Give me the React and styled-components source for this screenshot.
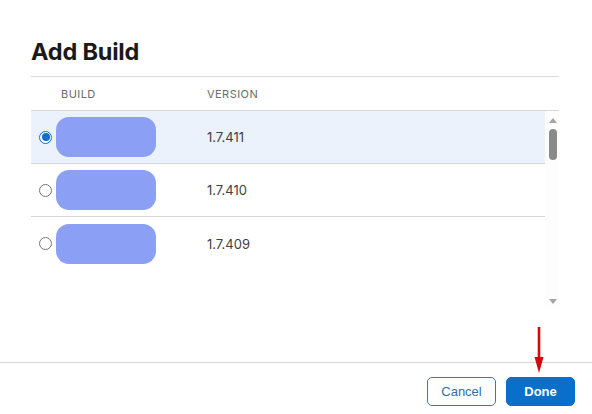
import React, { useState } from "react";
import styled, { createGlobalStyle } from "styled-components";

const Global = createGlobalStyle`
  html, body { margin: 0; padding: 0; background: #fff; }
  body { font-family: Inter, "Noto Sans", "Liberation Sans", sans-serif; }
  * { box-sizing: border-box; }
`;

const Page = styled.div`
  position: relative;
  width: 592px;
  height: 414px;
  display: flex;
  flex-direction: column;
  background: #fff;
  overflow: hidden;
`;

const Body = styled.div`
  padding: 0 33px 0 31px;
  flex: 1;
  display: flex;
  flex-direction: column;
`;

const Title = styled.h1`
  margin: 0;
  padding-top: 38px;
  height: 77px;
  font-size: 23.5px;
  font-weight: 700;
  color: #1a1a1a;
  letter-spacing: -0.2px;
  line-height: 28px;
  border-bottom: 1px solid #d9d9d9;
`;

const HeaderRow = styled.div`
  display: grid;
  grid-template-columns: 146px 1fr;
  height: 34px;
  align-items: center;
  padding-left: 30px;
  border-bottom: 1px solid #d6d6d6;
`;

const HeadCell = styled.div`
  font-size: 11px;
  color: #6b6b6b;
  letter-spacing: 0.45px;
  text-transform: uppercase;
  padding-top: 1px;
`;

const TableArea = styled.div`
  display: flex;
  height: 197px;
`;

const List = styled.div`
  flex: 1;
  display: flex;
  flex-direction: column;
`;

const Row = styled.label`
  display: grid;
  grid-template-columns: 17px 151px 1fr;
  align-items: center;
  height: 53px;
  padding-left: 8px;
  background: ${(p) => (p.$selected ? "#ebf2fb" : "#fff")};
  border-bottom: ${(p) => (p.$last ? "none" : "1px solid #d6d6d6")};
  cursor: pointer;
`;

const Radio = styled.span`
  width: 13px;
  height: 13px;
  border-radius: 50%;
  border: 1px solid ${(p) => (p.$checked ? "#0b6fcf" : "#777")};
  background: #fff;
  display: flex;
  align-items: center;
  justify-content: center;
  &::after {
    content: "";
    width: 8px;
    height: 8px;
    border-radius: 50%;
    background: ${(p) => (p.$checked ? "#0b6fcf" : "transparent")};
  }
`;

const Pill = styled.span`
  width: 100px;
  height: 40px;
  border-radius: 13px;
  background: #8ba0f4;
`;

const Version = styled.span`
  font-size: 13px;
  color: #404040;
`;

const Scrollbar = styled.div`
  width: 14px;
  display: flex;
  flex-direction: column;
  align-items: center;
  background: #fdfdfd;
  padding-top: 7px;
`;

const ArrowUp = styled.span`
  width: 0;
  height: 0;
  border-left: 4px solid transparent;
  border-right: 4px solid transparent;
  border-bottom: 5px solid #a3a3a3;
  margin-left: 1px;
`;

const Thumb = styled.span`
  width: 8px;
  height: 31px;
  border-radius: 4px;
  background: #8a8a8a;
  margin-top: 6px;
  margin-left: 2px;
`;

const Track = styled.span`
  flex: 1;
`;

const ArrowDown = styled(ArrowUp)`
  border-bottom: none;
  border-top: 5px solid #a3a3a3;
  margin-bottom: 4px;
`;

const Footer = styled.div`
  height: 52px;
  border-top: 1px solid #d6d6d6;
  display: flex;
  justify-content: flex-end;
  align-items: flex-start;
  gap: 10px;
  padding: 14px 17px 0 0;
`;

const Button = styled.button`
  width: 69px;
  height: 29px;
  border-radius: 5px;
  font-family: "Liberation Sans", Arial, sans-serif;
  font-size: 13px;
  font-weight: ${(p) => (p.$primary ? 700 : 400)};
  color: ${(p) => (p.$primary ? "#fff" : "#2f6ea6")};
  background: ${(p) => (p.$primary ? "#0a6fca" : "#fff")};
  border: 1px solid ${(p) => (p.$primary ? "#0a6fca" : "#3c78ad")};
  cursor: pointer;
  padding: 0;
`;

const RedArrow = styled.svg`
  position: absolute;
  left: 534px;
  top: 327px;
`;

const builds = [
  { v: "1.7.411" },
  { v: "1.7.410" },
  { v: "1.7.409" },
];

export default function App() {
  const [sel, setSel] = useState(0);
  return (
    <Page>
      <Global />
      <Body>
        <Title>Add Build</Title>
        <HeaderRow>
          <HeadCell>Build</HeadCell>
          <HeadCell>Version</HeadCell>
        </HeaderRow>
        <TableArea>
          <List>
            {builds.map((b, i) => (
              <Row
                key={b.v}
                $selected={sel === i}
                $last={i === builds.length - 1}
                onClick={() => setSel(i)}
              >
                <Radio $checked={sel === i} />
                <Pill />
                <Version>{b.v}</Version>
              </Row>
            ))}
          </List>
          <Scrollbar>
            <ArrowUp />
            <Thumb />
            <Track />
            <ArrowDown />
          </Scrollbar>
        </TableArea>
      </Body>
      <Footer>
        <Button>Cancel</Button>
        <Button $primary>Done</Button>
      </Footer>
      <RedArrow width="10" height="46" viewBox="0 0 10 46">
        <rect x="3.7" y="0" width="2.6" height="32" fill="#d20a0a" />
        <polygon points="0.5,30 9.5,30 5,46" fill="#d20a0a" />
      </RedArrow>
    </Page>
  );
}
